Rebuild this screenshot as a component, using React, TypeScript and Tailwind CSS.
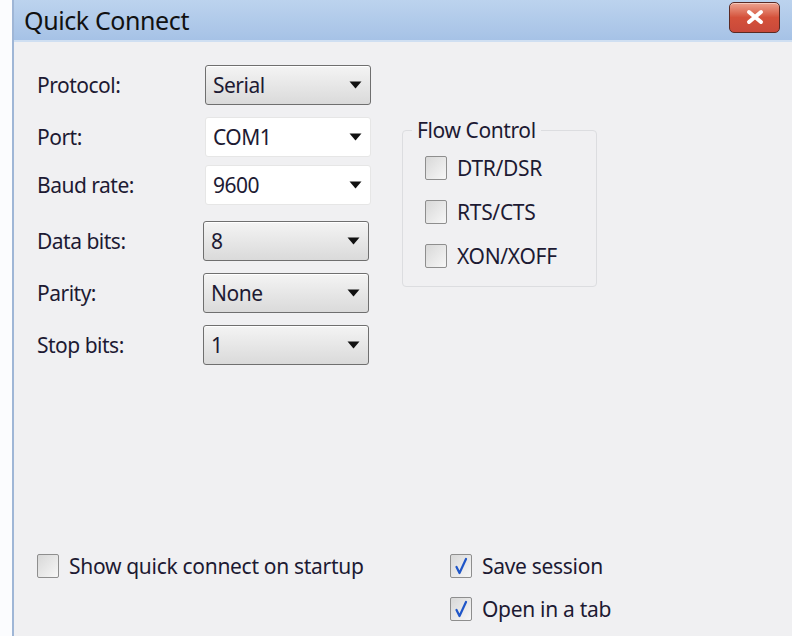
import { useState } from 'react'

const font = { fontFamily: '"Noto Sans", "Open Sans", sans-serif' }

function Arrow() {
  return (
    <svg width="13" height="8" viewBox="0 0 13 8" className="shrink-0">
      <path d="M0.5 0.5 L12.5 0.5 L6.5 7.5 Z" fill="#111" />
    </svg>
  )
}

function Combo({ value, flat, className = '' }: { value: string; flat?: boolean; className?: string }) {
  return (
    <div
      className={`h-[40px] flex items-center justify-between pl-[7px] pr-[8px] rounded-[3px] ${
        flat
          ? 'bg-white border border-[#e6e6e6]'
          : 'border border-[#6f6f6f] bg-gradient-to-b from-[#f4f4f4] to-[#dadada] shadow-[inset_0_1px_0_#fff]'
      } ${className}`}
    >
      <span className="text-[21px] leading-[28px] text-[#1d1a33] tracking-[-0.5px]">{value}</span>
      <Arrow />
    </div>
  )
}

function Check({ label, checked, onToggle }: { label: string; checked: boolean; onToggle: () => void }) {
  return (
    <button type="button" onClick={onToggle} className="h-[28px] flex items-center gap-[10px] text-left">
      <span className="w-[22px] h-[24px] border border-[#8e8e8e] rounded-[2px] bg-gradient-to-br from-[#d8d8d8] to-[#f7f7f7] flex items-center justify-center">
        {checked && (
          <svg width="14" height="18" viewBox="0 0 14 18">
            <path d="M2.5 10 L5.5 16 L12 2" fill="none" stroke="#1f56c8" strokeWidth="2.2" strokeLinecap="round" strokeLinejoin="round" />
          </svg>
        )}
      </span>
      <span className="text-[21px] leading-[28px] text-[#1d1a33] tracking-[-0.3px]">{label}</span>
    </button>
  )
}

export default function App() {
  const [flow, setFlow] = useState({ dtr: false, rts: false, xon: false })
  const [showStartup, setShowStartup] = useState(false)
  const [saveSession, setSaveSession] = useState(true)
  const [openTab, setOpenTab] = useState(true)

  const rows = [
    { label: 'Protocol:', value: 'Serial', flat: false, mt: 'mt-0', x: 'ml-[2px]' },
    { label: 'Port:', value: 'COM1', flat: true, mt: 'mt-[12px]', x: 'ml-[2px]' },
    { label: 'Baud rate:', value: '9600', flat: true, mt: 'mt-[8px]', x: 'ml-[2px]' },
    { label: 'Data bits:', value: '8', flat: false, mt: 'mt-[16px]', x: 'ml-0' },
    { label: 'Parity:', value: 'None', flat: false, mt: 'mt-[12px]', x: 'ml-0' },
    { label: 'Stop bits:', value: '1', flat: false, mt: 'mt-[12px]', x: 'ml-0' },
  ]

  return (
    <div className="w-[792px] h-[636px] flex bg-white overflow-hidden" style={font}>
      <div className="w-[12px] bg-[#fbfcfe]" />
      <div className="w-[2px] bg-[#9fb6d6]" />
      <div className="flex-1 flex flex-col">
        {/* title bar */}
        <div className="h-[42px] flex items-center justify-between pl-[10px] pr-[12px] bg-gradient-to-b from-[#bcd3ee] to-[#a6c2e6] border-b-2 border-[#cfdff2]">
          <span className="text-[25px] leading-[32px] text-[#111] tracking-[-0.4px]">Quick Connect</span>
          <button
            type="button"
            className="w-[51px] h-[31px] mb-[6px] rounded-[5px] border border-[#5a2a24] bg-gradient-to-b from-[#eba28f] via-[#d4513b] to-[#c9493a] flex items-center justify-center shadow-[inset_0_1px_0_#f7c9bc]"
          >
            <svg width="20" height="16" viewBox="0 0 20 16">
              <path d="M4 3 L16 13 M16 3 L4 13" stroke="#fff" strokeWidth="4" strokeLinecap="round" />
            </svg>
          </button>
        </div>

        {/* body */}
        <div className="flex-1 flex flex-col bg-[#f0f0f2] pl-[23px] pt-[23px] pb-[13px]">
          <div className="flex">
            <div className="flex flex-col w-[346px]">
              {rows.map((r) => (
                <div key={r.label} className={`flex items-center ${r.mt}`}>
                  <span className="w-[166px] text-[21px] leading-[28px] text-[#1d1a33] tracking-[-0.5px]">{r.label}</span>
                  <Combo value={r.value} flat={r.flat} className={`w-[166px] ${r.x}`} />
                </div>
              ))}
            </div>
            <fieldset className="ml-[19px] mt-[52px] w-[195px] h-[170px] border border-[#dcdde0] rounded-[4px] pl-[22px] pt-[11px]">
              <legend className="ml-[-13px] px-[5px] text-[21px] text-[#1d1a33] tracking-[-0.4px] leading-[26px]">Flow Control</legend>
              <div className="flex flex-col gap-[16px]">
                <Check label="DTR/DSR" checked={flow.dtr} onToggle={() => setFlow({ ...flow, dtr: !flow.dtr })} />
                <Check label="RTS/CTS" checked={flow.rts} onToggle={() => setFlow({ ...flow, rts: !flow.rts })} />
                <Check label="XON/XOFF" checked={flow.xon} onToggle={() => setFlow({ ...flow, xon: !flow.xon })} />
              </div>
            </fieldset>
          </div>

          <div className="mt-auto flex">
            <div className="w-[413px]">
              <Check label="Show quick connect on startup" checked={showStartup} onToggle={() => setShowStartup(!showStartup)} />
            </div>
            <div className="flex flex-col gap-[15px]">
              <Check label="Save session" checked={saveSession} onToggle={() => setSaveSession(!saveSession)} />
              <Check label="Open in a tab" checked={openTab} onToggle={() => setOpenTab(!openTab)} />
            </div>
          </div>
        </div>
      </div>
    </div>
  )
}
